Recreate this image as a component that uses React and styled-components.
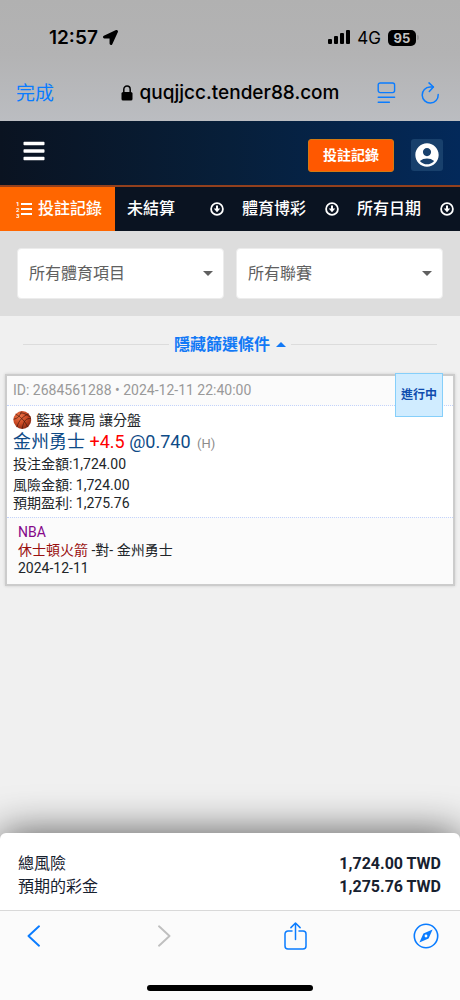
import React from "react";
import styled, { createGlobalStyle } from "styled-components";
import { FaBars, FaLocationArrow } from "react-icons/fa";
import { MdAccountCircle } from "react-icons/md";

const GlobalStyle = createGlobalStyle`
  *, *::before, *::after { box-sizing: border-box; }
  body {
    margin: 0;
    background: #f0f0f0;
    color: #212529;
    font-family: Roboto, "Noto Sans CJK TC", sans-serif;
    font-size: 14px;
    line-height: 18px;
  }
  button, select { font: inherit; color: inherit; }
  button { padding: 0; border: 0; background: none; cursor: pointer; }
  svg { display: block; flex: none; }
`;

const Page = styled.div`
  display: flex;
  flex-direction: column;
  min-height: 100vh;
`;

const BrowserTop = styled.div`
  background: linear-gradient(#b1b1b1, #b3b3b4 45%, #bbbdc1);
  color: #000;
  font-family: Inter, "Noto Sans CJK TC", sans-serif;
`;

const StatusBar = styled.div`
  display: flex;
  justify-content: space-between;
  align-items: center;
  height: 64px;
  padding: 11px 41px 0 49px;
`;

const StatusGroup = styled.div`
  display: flex;
  align-items: center;
  gap: ${(p) => p.$gap}px;
`;

const Clock = styled.span`
  font-size: 19px;
  font-weight: 600;
  line-height: 24px;
`;

const Network = styled.span`
  font-size: 17px;
  line-height: 20px;
`;

const BatteryBox = styled.span`
  display: flex;
  align-items: center;
  gap: 1px;
`;

const BatteryLevel = styled.span`
  width: 28px;
  border-radius: 5px;
  background: #000;
  color: #c4c4c4;
  font-size: 13px;
  font-weight: 700;
  line-height: 16px;
  text-align: center;
`;

const BatteryTip = styled.span`
  width: 2px;
  height: 5px;
  border-radius: 0 2px 2px 0;
  background: #999;
`;

const AddressBar = styled.div`
  display: grid;
  grid-template-columns: 1fr auto 1fr;
  align-items: center;
  height: 57px;
  padding: 0 16px;
`;

const DoneButton = styled.button`
  justify-self: start;
  padding-top: 3px;
  color: #0a7cff;
  font-size: 19px;
  line-height: 24px;
`;

const Address = styled.div`
  display: flex;
  align-items: center;
  gap: 7px;
  font-size: 19px;
  font-weight: 500;
  line-height: 24px;
`;

const AddressActions = styled.div`
  display: flex;
  justify-self: end;
  align-items: center;
  gap: 24px;
  padding-right: 4px;
`;

const IconButton = styled.button`
  color: ${(p) => (p.disabled ? "#bfbfbf" : "#0a7cff")};
`;

const Header = styled.header`
  display: flex;
  align-items: center;
  height: 66px;
  padding: 4px 17px 0 22px;
  border-bottom: 2px solid #93401d;
  background: linear-gradient(90deg, #0a1321, #071f3a 50%, #03295a);
  color: #fff;
`;

const MenuButton = styled.button`
  margin-right: auto;
  padding-bottom: 8px;
`;

const BetLogButton = styled.button`
  height: 33px;
  padding: 0 14px;
  border: 1px solid #d27a12;
  border-radius: 3px;
  background: #ff5800;
  font-size: 14px;
  font-weight: 700;
`;

const AccountButton = styled.button`
  display: grid;
  place-items: center;
  width: 32px;
  height: 32px;
  margin-left: 17px;
  border-radius: 3px;
  background: #18406c;
`;

const Tabs = styled.nav`
  display: grid;
  grid-template-columns: repeat(4, 1fr);
  height: 44px;
  background: #0a1321;
  color: #fff;
`;

const Tab = styled.button`
  display: flex;
  align-items: center;
  justify-content: ${(p) => (p.$active ? "flex-start" : "space-between")};
  gap: 5px;
  padding: ${(p) => (p.$active ? "0 12px 0 16px" : "0 6px 0 12px")};
  background: ${(p) => (p.$active ? "#ff6600" : "transparent")};
  font-size: 16px;
  font-weight: 500;
  white-space: nowrap;
`;

const Filters = styled.div`
  display: grid;
  grid-template-columns: 1fr 1fr;
  gap: 12px;
  padding: 17px;
  background: #ddd;
`;

const SelectBox = styled.label`
  display: grid;
  align-items: center;
  color: #606060;

  > * { grid-area: 1 / 1; }
  > svg { justify-self: end; margin-right: 11px; pointer-events: none; }
`;

const Select = styled.select`
  width: 100%;
  height: 51px;
  padding: 0 11px;
  border: 1px solid #ececec;
  border-radius: 4px;
  background: #fff;
  appearance: none;
  font-size: 16px;
`;

const FilterToggle = styled.div`
  display: flex;
  align-items: center;
  gap: 5px;
  padding: 0 23px;
  height: 57px;

  &::before, &::after {
    content: "";
    flex: 1;
    height: 1px;
    background: #dcdcdc;
  }
`;

const ToggleButton = styled.button`
  display: flex;
  align-items: center;
  gap: 6px;
  color: #1279f6;
  font-size: 16px;
  font-weight: 700;
`;

const Ticket = styled.article`
  position: relative;
  margin: 1px 5px 0;
  border: 2px solid #ccc;
  background: #fff;
  box-shadow: 0 0 3px rgba(0, 0, 0, 0.15);
`;

const TicketHead = styled.div`
  padding: 5px 6px 6px;
  border-bottom: 1px dotted #c3d3fb;
  background: #fbfbfb;
  color: #999;
`;

const StatusBadge = styled.span`
  position: absolute;
  top: -3px;
  right: 10px;
  padding: 12px 5px;
  border: 1px solid #86cffa;
  background: #d0ecff;
  color: #0f4bae;
  font-size: 12px;
  font-weight: 700;
`;

const TicketBody = styled.div`
  padding: 5px 6px;
`;

const MarketLine = styled.div`
  display: flex;
  align-items: center;
  gap: 4px;
`;

const Selection = styled.div`
  color: #0e4b87;
  font-size: 18px;
  line-height: 25px;
`;

const Handicap = styled.span`
  color: #ff0000;
`;

const Side = styled.span`
  margin-left: 2px;
  color: #8c8c8c;
  font-size: 13px;
  line-height: 18px;
`;

const Stake = styled.div`
  padding: 1px 0 3px;
`;

const TicketFoot = styled.div`
  padding: 5px 11px 7px;
  border-top: 1px dotted #c3d3fb;
  background: #fbfbfb;
`;

const League = styled.div`
  color: #85078a;
`;

const HomeTeam = styled.span`
  color: #990f10;
`;

const BottomDock = styled.div`
  position: sticky;
  bottom: 0;
  margin-top: auto;
`;

const Summary = styled.dl`
  margin: 0;
  padding: 19px 19px 12px 18px;
  border-radius: 6px 6px 0 0;
  background: #fff;
  box-shadow: 0 0 40px rgba(0, 0, 0, 0.65);
  color: #17212f;
  font-size: 16px;
  line-height: 23px;
`;

const SummaryRow = styled.div`
  display: flex;
  justify-content: space-between;

  dd { margin: 0; font-weight: 700; }
`;

const BrowserBottom = styled.div`
  position: relative;
  display: flex;
  flex-direction: column;
  align-items: center;
  justify-content: space-between;
  height: 90px;
  padding-bottom: 9px;
  border-top: 1px solid #d9d9d9;
  background: #fbfbfb;
`;

const BrowserNav = styled.div`
  display: flex;
  justify-content: space-between;
  align-items: center;
  width: 100%;
  height: 50px;
  padding: 0 21px 0 20px;

  > button { display: grid; place-items: center; width: 26px; }
`;

const HomeIndicator = styled.div`
  width: 36%;
  height: 6px;
  border-radius: 3px;
  background: #000;
`;

const stroke = {
  fill: "none",
  stroke: "currentColor",
  strokeLinecap: "round",
  strokeLinejoin: "round",
};

const SignalIcon = () => (
  <svg width="22" height="15" viewBox="0 0 22 15" fill="currentColor">
    <rect x="0" y="9" width="4" height="5" rx="1" />
    <rect x="6" y="6" width="4" height="8" rx="1" />
    <rect x="12" y="3" width="4" height="11" rx="1" />
    <rect x="18" y="0" width="4" height="14" rx="1" />
  </svg>
);

const LockIcon = () => (
  <svg width="12" height="16" viewBox="0 0 12 16">
    <rect x="0.5" y="7" width="11" height="8.5" rx="1.6" fill="currentColor" />
    <path d="M2.8 7.5V4.4a3.2 3.4 0 0 1 6.4 0v3.1" {...stroke} strokeWidth="1.5" />
  </svg>
);

const ReaderIcon = () => (
  <svg width="19" height="22" viewBox="0 0 19 22" {...stroke} strokeWidth="1.4">
    <rect x="1.2" y="1" width="16.4" height="9.6" rx="2" />
    <path d="M1.2 15.2H17.6M1.2 20.2H12.4" />
  </svg>
);

const ReloadIcon = () => (
  <svg width="20" height="22" viewBox="0 0 20 22" {...stroke} strokeWidth="1.5">
    <path d="M13.2 5H10a8 8 0 1 0 8.2 7.6" />
    <path d="M9 0.9 13.4 5 9.3 9.4" />
  </svg>
);

const NumberedListIcon = () => (
  <svg width="17" height="17" viewBox="0 0 17 17" fill="currentColor">
    <g fontFamily="Roboto, sans-serif" fontSize="6" fontWeight="700">
      <text x="0" y="5">1</text>
      <text x="0" y="11">2</text>
      <text x="0" y="17">3</text>
    </g>
    <rect x="5" y="2" width="11" height="2" />
    <rect x="5" y="7" width="11" height="2" />
    <rect x="5" y="12" width="11" height="2" />
  </svg>
);

const ArrowCircleIcon = () => (
  <svg width="14" height="14" viewBox="0 0 14 14">
    <circle cx="7" cy="7" r="5.9" fill="none" stroke="currentColor" strokeWidth="1.8" />
    <path d="M6 3.4H8V6.6H10.3L7 10.2 3.7 6.6H6Z" fill="currentColor" />
  </svg>
);

const Caret = ({ up }) => (
  <svg width="10" height="5" viewBox="0 0 10 5" fill="currentColor">
    <path d={up ? "M0 5 5 0 10 5Z" : "M0 0H10L5 5Z"} />
  </svg>
);

const BasketballIcon = () => (
  <svg width="19" height="18" viewBox="0 0 19 18">
    <defs>
      <radialGradient id="ball" cx="0.35" cy="0.3" r="0.75">
        <stop offset="0" stopColor="#ee7548" />
        <stop offset="0.55" stopColor="#cc4a24" />
        <stop offset="1" stopColor="#882812" />
      </radialGradient>
    </defs>
    <circle cx="9.3" cy="9" r="8.9" fill="url(#ball)" />
    <g fill="none" stroke="#42180d" strokeWidth="0.7">
      <path d="M2.6 3.2C7 5.4 12.4 10 14.6 16.2" />
      <path d="M15.6 2.8C11 4.6 5.2 9.6 4 16.2" />
      <path d="M8.3 0.4C7.2 4.4 5.2 7.5 0.5 8.2" />
      <path d="M18 7.5C13.6 7.2 10.6 9 9.2 17.7" />
      <path d="M7.9 2.2C10.6 1.4 13 3.7 17.6 6" />
    </g>
  </svg>
);

const Chevron = ({ right }) => (
  <svg width="13" height="22" viewBox="0 0 13 22" {...stroke} strokeWidth="1.9">
    <path d={right ? "M1 1.3 11.5 11 1 20.7" : "M12 1.3 1.5 11 12 20.7"} />
  </svg>
);

const ShareIcon = () => (
  <svg width="23" height="28" viewBox="0 0 23 28" {...stroke} strokeWidth="1.5">
    <path d="M8 9H4a3 3 0 0 0-3 3v12a3 3 0 0 0 3 3h15a3 3 0 0 0 3-3V12a3 3 0 0 0-3-3h-4" />
    <path d="M11.5 17.5V1.2M6.9 5.6 11.5 1 16.1 5.6" />
  </svg>
);

const CompassIcon = () => (
  <svg width="26" height="26" viewBox="0 0 26 26">
    <circle cx="13" cy="13" r="11.7" fill="none" stroke="currentColor" strokeWidth="1.6" />
    <path
      d="M19.6 6.4 15.6 15.6 6.4 19.6 10.4 10.4ZM13 11.6a1.4 1.4 0 1 0 0 2.8 1.4 1.4 0 0 0 0-2.8Z"
      fill="currentColor"
      fillRule="evenodd"
    />
  </svg>
);

const FilterSelect = ({ label }) => (
  <SelectBox>
    <Select aria-label={label}>
      <option>{label}</option>
    </Select>
    <Caret />
  </SelectBox>
);

const tabs = ["未結算", "體育博彩", "所有日期"];
const totals = [
  ["總風險", "1,724.00 TWD"],
  ["預期的彩金", "1,275.76 TWD"],
];

export default function App() {
  return (
    <Page>
      <GlobalStyle />
      <BrowserTop>
        <StatusBar>
          <StatusGroup $gap={5}>
            <Clock>12:57</Clock>
            <FaLocationArrow size={15} />
          </StatusGroup>
          <StatusGroup $gap={7}>
            <SignalIcon />
            <Network>4G</Network>
            <BatteryBox>
              <BatteryLevel>95</BatteryLevel>
              <BatteryTip />
            </BatteryBox>
          </StatusGroup>
        </StatusBar>
        <AddressBar>
          <DoneButton>完成</DoneButton>
          <Address>
            <LockIcon />
            quqjjcc.tender88.com
          </Address>
          <AddressActions>
            <IconButton aria-label="Reader"><ReaderIcon /></IconButton>
            <IconButton aria-label="Reload"><ReloadIcon /></IconButton>
          </AddressActions>
        </AddressBar>
      </BrowserTop>

      <Header>
        <MenuButton aria-label="Menu"><FaBars size={24} /></MenuButton>
        <BetLogButton>投註記錄</BetLogButton>
        <AccountButton aria-label="Account"><MdAccountCircle size={28} /></AccountButton>
      </Header>

      <Tabs>
        <Tab $active>
          <NumberedListIcon />
          投註記錄
        </Tab>
        {tabs.map((name) => (
          <Tab key={name}>
            {name}
            <ArrowCircleIcon />
          </Tab>
        ))}
      </Tabs>

      <Filters>
        <FilterSelect label="所有體育項目" />
        <FilterSelect label="所有聯賽" />
      </Filters>

      <FilterToggle>
        <ToggleButton>
          隱藏篩選條件
          <Caret up />
        </ToggleButton>
      </FilterToggle>

      <Ticket>
        <TicketHead>ID: 2684561288 • 2024-12-11 22:40:00</TicketHead>
        <StatusBadge>進行中</StatusBadge>
        <TicketBody>
          <MarketLine>
            <BasketballIcon />
            籃球 賽局 讓分盤
          </MarketLine>
          <Selection>
            金州勇士 <Handicap>+4.5</Handicap> @0.740 <Side>(H)</Side>
          </Selection>
          <Stake>投注金額:1,724.00</Stake>
          <div>風險金額: 1,724.00</div>
          <div>預期盈利: 1,275.76</div>
        </TicketBody>
        <TicketFoot>
          <League>NBA</League>
          <div><HomeTeam>休士頓火箭</HomeTeam> -對- 金州勇士</div>
          <div>2024-12-11</div>
        </TicketFoot>
      </Ticket>

      <BottomDock>
        <Summary>
          {totals.map(([label, amount]) => (
            <SummaryRow key={label}>
              <dt>{label}</dt>
              <dd>{amount}</dd>
            </SummaryRow>
          ))}
        </Summary>
        <BrowserBottom>
          <BrowserNav>
            <IconButton aria-label="Back"><Chevron /></IconButton>
            <IconButton aria-label="Forward" disabled><Chevron right /></IconButton>
            <IconButton aria-label="Share"><ShareIcon /></IconButton>
            <IconButton aria-label="Open in browser"><CompassIcon /></IconButton>
          </BrowserNav>
          <HomeIndicator />
        </BrowserBottom>
      </BottomDock>
    </Page>
  );
}
